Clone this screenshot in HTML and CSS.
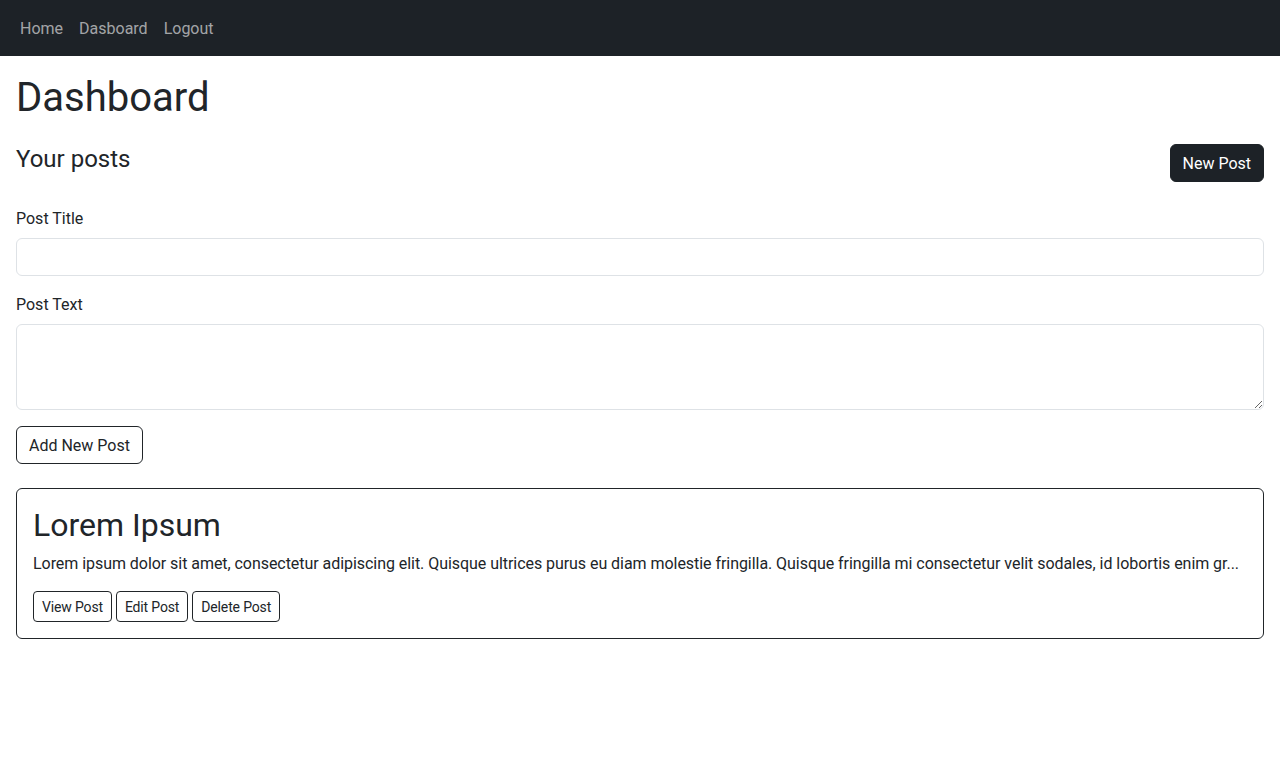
FILE: index.html
```html
<!DOCTYPE html>
<html lang="en">
<head>
<meta charset="utf-8">
<title>Dashboard</title>
<link rel="stylesheet" href="styles.css">
</head>
<body>
<nav class="navbar">
  <ul class="nav-list">
    <li><a class="nav-link" href="#">Home</a></li>
    <li><a class="nav-link" href="#">Dasboard</a></li>
    <li><a class="nav-link" href="#">Logout</a></li>
  </ul>
</nav>
<main class="page">
  <h1 class="page-title">Dashboard</h1>
  <div class="section-head">
    <h4 class="section-title">Your posts</h4>
    <button class="btn btn-dark">New Post</button>
  </div>
  <form class="post-form">
    <div class="field">
      <label class="form-label" for="title">Post Title</label>
      <input class="form-control" id="title" type="text">
    </div>
    <div class="field">
      <label class="form-label" for="text">Post Text</label>
      <textarea class="form-control textarea" id="text" rows="3"></textarea>
    </div>
    <button type="button" class="btn btn-outline">Add New Post</button>
  </form>
  <div class="card">
    <h2 class="card-title">Lorem Ipsum</h2>
    <p class="card-text">Lorem ipsum dolor sit amet, consectetur adipiscing elit. Quisque ultrices purus eu diam molestie fringilla. Quisque fringilla mi consectetur velit sodales, id lobortis enim gr...</p>
    <div class="card-actions">
      <button class="btn btn-sm btn-outline">View Post</button>
      <button class="btn btn-sm btn-outline">Edit Post</button>
      <button class="btn btn-sm btn-outline">Delete Post</button>
    </div>
  </div>
</main>
</body>
</html>
```
FILE: styles.css
```css
* { box-sizing: border-box; }
body {
  margin: 0;
  font-family: Roboto, "Liberation Sans", sans-serif;
  font-size: 16px;
  line-height: 1.5;
  color: #212529;
  background: #fff;
}
.navbar {
  background: #1d2227;
  height: 56px;
  padding: 8px 12px;
  display: flex;
  align-items: center;
}
.nav-list {
  list-style: none;
  margin: 0;
  padding: 0;
  display: flex;
}
.nav-link {
  display: block;
  padding: 9px 8px 7px;
  color: rgba(255, 255, 255, 0.6);
  text-decoration: none;
}
.page {
  padding: 18px 16px 16px;
}
.page-title {
  margin: 0 0 22px;
  font-size: 40px;
  font-weight: 400;
  line-height: 1.2;
}
.section-head {
  display: flex;
  justify-content: space-between;
  align-items: flex-start;
  margin-bottom: 24px;
}
.section-title {
  margin: 0;
  padding-top: 1px;
  font-size: 24px;
  font-weight: 400;
  line-height: 1.2;
}
.btn {
  display: inline-block;
  font-family: inherit;
  font-size: 16px;
  line-height: 24px;
  padding: 7px 12px 5px;
  border: 1px solid #212529;
  border-radius: 6px;
  cursor: pointer;
}
.btn-dark {
  background: #1d2227;
  border-color: #1d2227;
  color: #fff;
}
.btn-outline {
  background: transparent;
  color: #212529;
}
.btn-sm {
  font-size: 14px;
  line-height: 21px;
  padding: 5px 8px 3px;
  border-radius: 4px;
  letter-spacing: -0.15px;
}
.field {
  margin-bottom: 16px;
}
.form-label {
  display: block;
  padding-top: 1px;
  margin-bottom: 7px;
}
.form-control {
  display: block;
  width: 100%;
  height: 38px;
  padding: 6px 12px;
  font-family: inherit;
  font-size: 16px;
  line-height: 24px;
  color: #212529;
  background: #fff;
  border: 1px solid #dee2e6;
  border-radius: 6px;
}
.textarea {
  height: 86px;
  resize: vertical;
}
.post-form {
  margin-bottom: 24px;
}
.card {
  border: 1px solid #212529;
  border-radius: 6px;
  padding: 17px 16px 16px;
}
.card-title {
  margin: 0 0 8px;
  font-size: 32px;
  font-weight: 400;
  line-height: 1.2;
}
.card-text {
  margin: 0 0 15px;
  white-space: nowrap;
  overflow: hidden;
  text-overflow: ellipsis;
  letter-spacing: -0.05px;
}
.card-actions {
  display: flex;
  gap: 4px;
}
```
